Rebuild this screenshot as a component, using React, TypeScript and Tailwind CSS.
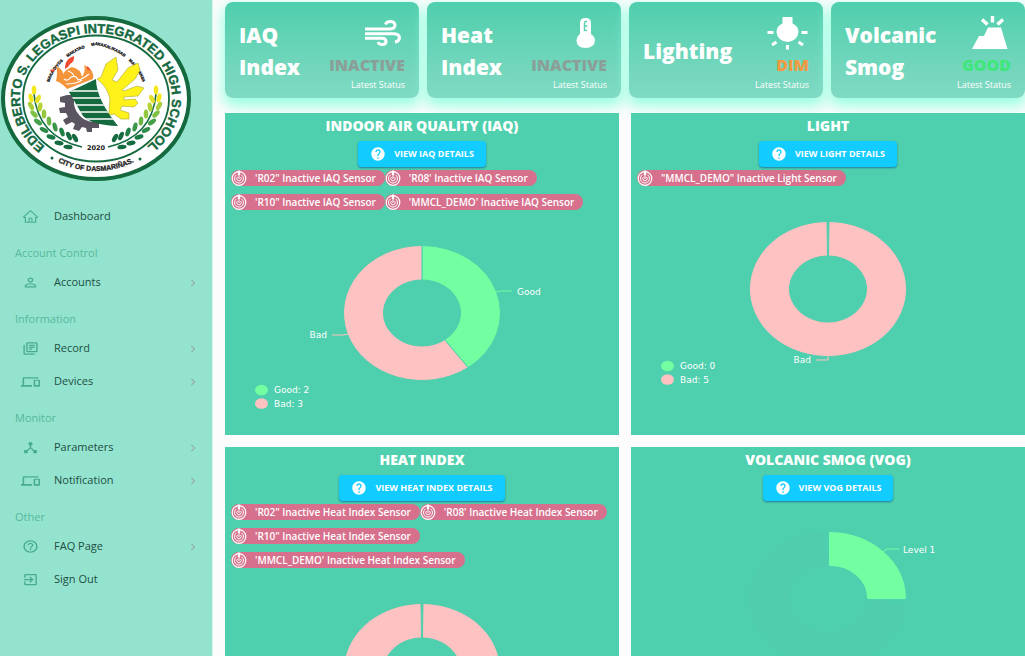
import React from "react";
import { AiOutlineHome } from "react-icons/ai";
import {
  MdChevronRight,
  MdDeviceHub,
  MdDevices,
  MdExitToApp,
  MdHelp,
  MdHelpOutline,
  MdOutlineLibraryBooks,
  MdPersonOutline,
} from "react-icons/md";
import type { IconType } from "react-icons";

const MINT = "#4ecfad";
const GREEN = "#72ffa2";
const PINK = "#ffc2c2";

/* ---------- School seal ---------- */

const LAUREL = [
  { x: 34, y: 90, r: 0, c: "#f4e81c" },
  { x: 31, y: 98, r: -15, c: "#f4e81c" },
  { x: 38, y: 99, r: 25, c: "#e3e02a" },
  { x: 31, y: 106, r: -30, c: "#a8cf3a" },
  { x: 40, y: 107, r: 10, c: "#b5d334" },
  { x: 34, y: 114, r: -45, c: "#7cc142" },
  { x: 44, y: 114, r: 0, c: "#93c83d" },
  { x: 38, y: 122, r: -55, c: "#43a047" },
  { x: 49, y: 121, r: -5, c: "#6bb544" },
  { x: 44, y: 130, r: -65, c: "#2e8b4a" },
  { x: 55, y: 127, r: -15, c: "#3a9648" },
  { x: 51, y: 137, r: -75, c: "#1a7a45" },
  { x: 62, y: 132, r: -20, c: "#1f7f46" },
  { x: 59, y: 143, r: -80, c: "#146b40" },
  { x: 69, y: 136, r: -25, c: "#146b40" },
  { x: 68, y: 147, r: -85, c: "#146b40" },
  { x: 75, y: 138, r: -30, c: "#146b40" },
];

function Laurel() {
  return (
    <g>
      <path d="M34 94 Q38 137 82 147" fill="none" stroke="#146b40" strokeWidth="1.6" />
      {LAUREL.map((l, i) => (
        <ellipse key={i} cx={l.x} cy={l.y} rx="2.3" ry="4.6" fill={l.c} transform={`rotate(${l.r} ${l.x} ${l.y})`} />
      ))}
    </g>
  );
}

function SchoolSeal() {
  return (
    <svg viewBox="0 15 192 168" className="block h-[168px] w-48" role="img" aria-label="School seal">
      <defs>
        <path id="ringTop" d="M96 163 A76 65 0 0 1 96 33 A76 65 0 0 1 96 163" />
        <path id="mottoTop" d="M96 149 A61 53 0 0 1 96 45 A61 53 0 0 1 96 149" />
        <path id="ringBottom" d="M17 98 A79 73 0 0 0 175 98" />
        <clipPath id="torch">
          <path d="M69 92 L96 79 Q96 99 118 126 Q92 125 83 116 Z" />
        </clipPath>
      </defs>
      <ellipse cx="96" cy="98.5" rx="93" ry="80.5" fill="#fff" stroke="#14693f" strokeWidth="4" />
      <ellipse cx="96" cy="98.5" rx="73" ry="63" fill="none" stroke="#14693f" strokeWidth="1.8" />
      <text fill="#14693f" stroke="#14693f" strokeWidth="0.4" fontFamily="Liberation Sans, sans-serif" fontWeight="700" fontSize="13" textAnchor="middle">
        <textPath href="#ringTop" startOffset="50%">EDILBERTO S. LEGASPI INTEGRATED HIGH SCHOOL</textPath>
      </text>
      <text fill="#222" stroke="#222" strokeWidth="0.3" fontFamily="Liberation Sans, sans-serif" fontWeight="700" fontSize="4" textAnchor="middle">
        <textPath href="#mottoTop" startOffset="50%">
          {"MAKA-DIYOS\u00a0\u00a0\u00a0\u00a0\u00a0MAKATAO\u00a0\u00a0\u00a0\u00a0\u00a0\u00a0MAKAKALIKASAN\u00a0\u00a0\u00a0\u00a0\u00a0MAKABANSA"}
        </textPath>
      </text>
      <text fill="#222" stroke="#222" strokeWidth="0.3" fontFamily="Liberation Sans, sans-serif" fontWeight="700" fontSize="7" textAnchor="middle">
        <textPath href="#ringBottom" startOffset="50%">CITY OF DASMARIÑAS.</textPath>
      </text>
      <circle cx="52" cy="158" r="1.5" fill="#14693f" />
      <circle cx="140" cy="159" r="1.5" fill="#14693f" />
      <Laurel />
      <g transform="translate(190 0) scale(-1 1)">
        <Laurel />
      </g>
      <text x="96" y="150" fill="#222" fontFamily="DejaVu Sans, sans-serif" fontWeight="700" fontSize="6.5" textAnchor="middle">2020</text>
      {/* gear */}
      <path
        d="M67 95 L60 97 L60 102 L65 103 L65 107 L59 108 L60 113 L66 113 L68 117 L63 120 L66 125 L72 122 L75 124 L73 129 L79 131 L82 127 L86 128 L87 132 L92 132 L92 128 L99 128 L99 121 Q88 124 80 116 Q73 109 74 99 L72 95 Z"
        fill="#5a5560"
      />
      {/* sun */}
      <path
        d="M97 79 L101 77 L106 64 L116 57 L118 70 L112 80 L117 82 L128 68 L138 63 L140 70 L135 79 L122 90 L124 91 L137 86 L144 88 L138 96 L124 97 L124 100 L135 99 L138 103 L134 107 L122 106 L120 110 L129 113 L129 119 L121 119 L114 114 L109 115 Q109 107 110 99 Q107 86 97 79 Z"
        fill="#fff21a"
        stroke="#b6b33a"
        strokeWidth="0.7"
      />
      {/* torch */}
      <g clipPath="url(#torch)">
        <rect x="66" y="77" width="56" height="52" fill="#14693f" />
        <path d="M66 91 H122 M66 98 H122 M66 105 H122 M66 112 H122 M66 119 H122" stroke="#fff" strokeWidth="1.5" />
      </g>
      {/* flame */}
      <path
        d="M67 89 Q62 83 56 81 Q58 72 56 66 Q63 69 63 74 Q66 69 72 67 Q81 69 82 77 Q86 71 84 65 Q95 70 93 79 Q80 84 67 89 Z"
        fill="#f5953b"
      />
      <path d="M64 79 Q68 82 71 77 Q76 75 78 80 Q83 79 89 74 M66 84 Q77 84 82 80 M68 71 Q74 73 74 77" fill="none" stroke="#fff" strokeWidth="1.2" />
      <path d="M65 67 Q65 59 74 56 Q75 61 70 64 Q69 67 65 69 Z M49 70 L55 69 L54 72 Z M87 66 Q90 68 91 71 L87 69 Z" fill="#ef4b32" />
    </svg>
  );
}

/* ---------- Sidebar ---------- */

type NavItem = { label: string; icon: IconType; wide?: boolean; more?: boolean };
type NavGroup = { heading?: string; items: NavItem[] };

const NAV: NavGroup[] = [
  { items: [{ label: "Dashboard", icon: AiOutlineHome }] },
  { heading: "Account Control", items: [{ label: "Accounts", icon: MdPersonOutline, more: true }] },
  {
    heading: "Information",
    items: [
      { label: "Record", icon: MdOutlineLibraryBooks, more: true },
      { label: "Devices", icon: MdDevices, wide: true, more: true },
    ],
  },
  {
    heading: "Monitor",
    items: [
      { label: "Parameters", icon: MdDeviceHub, more: true },
      { label: "Notification", icon: MdDevices, wide: true, more: true },
    ],
  },
  {
    heading: "Other",
    items: [
      { label: "FAQ Page", icon: MdHelpOutline, more: true },
      { label: "Sign Out", icon: MdExitToApp },
    ],
  },
];

function Sidebar() {
  return (
    <aside className="w-[213px] shrink-0 border-r border-[#d5f5ec] bg-[#94e3ce] pt-[15px]">
      <SchoolSeal />
      <nav className="mt-[17px]">
        {NAV.map((group, i) => (
          <div key={i}>
            {group.heading && (
              <h2 className="flex h-[33px] items-center pt-2 pl-[15px] text-[11px] font-medium text-[#56b99b]">{group.heading}</h2>
            )}
            <ul>
              {group.items.map(({ label, icon: Icon, wide, more }) => (
                <li key={label}>
                  <a href="#" className="flex h-[33px] items-center pr-3 pl-[19px] text-[11px] font-medium text-[#1d4f43]">
                    <span className="mr-[13px] flex w-[22px] justify-center text-[#48ad90]">
                      <Icon preserveAspectRatio="none" className={wide ? "h-[14px] w-[19px]" : "h-[15px] w-[17px]"} />
                    </span>
                    <span className="flex-1">{label}</span>
                    {more && <MdChevronRight className="size-[14px] text-[#94aca6]" />}
                  </a>
                </li>
              ))}
            </ul>
          </div>
        ))}
      </nav>
    </aside>
  );
}

/* ---------- Status cards ---------- */

const WindIcon = () => (
  <svg viewBox="0 0 40 32" className="h-8 w-10" fill="none" stroke="#fff" strokeWidth="3">
    <path d="M0 13 H24 Q30 13 30 9 Q29.500 5.500 25.500 5.500 Q21.500 5.500 20.500 8.500" />
    <path d="M0 17.700 H29 Q34.500 18 34.500 22 Q34 25.500 30 26" />
    <path d="M0 22.200 H17 Q21 22.200 21 25.500 Q21 28.500 17 28.500 Q14 28.500 13 26" />
  </svg>
);

const ThermometerIcon = () => (
  <svg viewBox="0 0 40 32" className="h-8 w-10">
    <path d="M13 18 V7 Q13 2 18.500 2 Q24 2 24 7 V18 Q28 20.500 28 25 Q27 32 18.500 32 Q10 32 9.500 25 Q9.500 20.500 13 18 Z" fill="#fff" />
    <path d="M17.500 15 V7 Q17.500 5.500 19 5.500 H20 M17.500 10 H20.500 M17.500 14.500 H20" fill="none" stroke="#5fd2b4" strokeWidth="1.500" />
  </svg>
);

const BulbIcon = () => (
  <svg viewBox="0 0 40 32" className="h-8 w-10 overflow-visible">
    <path d="M13.500 1 H23.500 V7.500 Q29.500 10 29.500 16 Q28.500 25 18.500 26 Q8.500 25 7.500 16 Q7.500 10 13.500 7.500 Z" fill="#fff" />
    <path d="M-1.500 16.500 H4.500 M32.500 16.500 H38.500 M18.500 29 V33.500 M3 29 L7.500 26 M29.500 26 L34 29" stroke="#fff" strokeWidth="3" />
  </svg>
);

const VolcanoIcon = () => (
  <svg viewBox="0 0 40 32" className="h-8 w-10 overflow-visible">
    <path d="M1 33 L8 20 L13 20 L17 11.500 H30 L36.500 33 Z" fill="#fff" />
    <path d="M21.500 0 V6.500 M11 3.500 L16.500 8.500 M32 3.500 L26.500 8.500" stroke="#fff" strokeWidth="3.400" />
  </svg>
);

const CARDS = [
  { title: "IAQ Index", status: "INACTIVE", tone: "text-[#8b9f99]", Icon: WindIcon },
  { title: "Heat Index", status: "INACTIVE", tone: "text-[#8b9f99]", Icon: ThermometerIcon },
  { title: "Lighting", status: "DIM", tone: "text-[#f09b42]", Icon: BulbIcon },
  { title: "Volcanic Smog", status: "GOOD", tone: "text-[#40e67c]", Icon: VolcanoIcon },
];

function StatusCards() {
  return (
    <section className="grid grid-cols-4 gap-2">
      {CARDS.map(({ title, status, tone, Icon }) => (
        <article
          key={title}
          className="flex min-h-24 items-center rounded-lg bg-linear-to-b from-[#4ecfad] to-[#80dac3] px-[14px] shadow-[0_6px_14px_2px_#98ffe1]"
        >
          <h3 className="w-0 flex-1 pt-[2px] text-[21px] leading-8 font-extrabold text-white">{title}</h3>
          <div className="flex flex-col items-end pt-[6px]">
            <Icon />
            <p className={`mt-[5px] text-[16px] leading-6 font-extrabold ${tone}`}>{status}</p>
            <p className="mt-[2px] text-[9px] leading-3 font-medium text-white">Latest Status</p>
          </div>
        </article>
      ))}
    </section>
  );
}

/* ---------- Sensor panels ---------- */

const CX = 197;
const CY = 96;

function slicePath(from: number, to: number) {
  const at = (turn: number, rx: number, ry: number) => {
    const a = turn * Math.PI * 2;
    return `${(CX + rx * Math.sin(a)).toFixed(2)} ${(CY - ry * Math.cos(a)).toFixed(2)}`;
  };
  const large = to - from > 0.5 ? 1 : 0;
  return `M${at(from, 78.5, 67.5)} A78.5 67.5 0 ${large} 1 ${at(to, 78.5, 67.5)} L${at(to, 38.5, 33)} A38.5 33 0 ${large} 0 ${at(from, 38.5, 33)} Z`;
}

function Slice({ from, to, color }: { from: number; to: number; color: string }) {
  return <path d={slicePath(from, to)} fill={color} stroke={MINT} strokeWidth="1" />;
}

function Legend({ good, bad }: { good: number; bad: number }) {
  return (
    <g>
      <ellipse cx="36.500" cy="173" rx="6.500" ry="5.300" fill={GREEN} />
      <text x="49" y="176">{`Good: ${good}`}</text>
      <ellipse cx="36.500" cy="186.500" rx="6.500" ry="5.300" fill={PINK} />
      <text x="49" y="190">{`Bad: ${bad}`}</text>
    </g>
  );
}

function Chart({ children }: { children: React.ReactNode }) {
  return (
    <svg viewBox="0 0 394 218" className="block h-[218px] w-full fill-white font-['DejaVu_Sans',sans-serif] text-[9px]">
      {children}
    </svg>
  );
}

const FullBadChart = () => (
  <Chart>
    <Slice from={0.002} to={0.998} color={PINK} />
    <path d="M197 163 V167 H185" fill="none" stroke={PINK} />
    <text x="180" y="170" textAnchor="end">Bad</text>
    <Legend good={0} bad={5} />
  </Chart>
);

const AirChart = () => (
  <Chart>
    <Slice from={0} to={0.4} color={GREEN} />
    <Slice from={0.4} to={1} color={PINK} />
    <path d="M271 75 L275 74 H287" fill="none" stroke={GREEN} />
    <text x="292" y="78">Good</text>
    <path d="M123 117 L119 118 H107" fill="none" stroke={PINK} />
    <text x="102" y="121" textAnchor="end">Bad</text>
    <Legend good={2} bad={3} />
  </Chart>
);

const SmogChart = () => (
  <Chart>
    <path d={slicePath(0.26, 0.995)} fill="#f08aa0" opacity="0.015" />
    <path d="M199 30 A76 66 0 0 1 274 95 H237 A38 32.500 0 0 0 199 62 Z" fill={GREEN} stroke={GREEN} strokeWidth="2" strokeLinejoin="round" />
    <path d="M252 49 L256 46 H268" fill="none" stroke={GREEN} />
    <text x="272" y="50">Level 1</text>
  </Chart>
);

const SensorIcon = () => (
  <svg viewBox="0 0 16 16" className="size-4 shrink-0" fill="none" stroke="#fff">
    <circle cx="8" cy="8.500" r="6.800" strokeWidth="1.200" />
    <path d="M5.500 4.800 A4.500 4.500 0 1 0 10.500 4.800" />
    <path d="M6.500 7 A2.200 2.200 0 1 0 9.500 7" />
    <path d="M8 0.500 V5" strokeWidth="2.400" />
    <path d="M8 5 V9" />
  </svg>
);

type PanelData = { title: string; action: string; sensors: string[]; chart: React.ReactNode };

const PANELS: PanelData[] = [
  {
    title: "INDOOR AIR QUALITY (IAQ)",
    action: "VIEW IAQ DETAILS",
    sensors: [
      "'R02\" Inactive IAQ Sensor",
      "'R08' Inactive IAQ Sensor",
      "'R10\" Inactive IAQ Sensor",
      "'MMCL_DEMO' Inactive IAQ Sensor",
    ],
    chart: <AirChart />,
  },
  {
    title: "LIGHT",
    action: "VIEW LIGHT DETAILS",
    sensors: ["\"MMCL_DEMO\" Inactive Light Sensor"],
    chart: <FullBadChart />,
  },
  {
    title: "HEAT INDEX",
    action: "VIEW HEAT INDEX DETAILS",
    sensors: [
      "'R02\" Inactive Heat Index Sensor",
      "'R08' Inactive Heat Index Sensor",
      "'R10\" Inactive Heat Index Sensor",
      "'MMCL_DEMO' Inactive Heat Index Sensor",
    ],
    chart: <FullBadChart />,
  },
  { title: "VOLCANIC SMOG (VOG)", action: "VIEW VOG DETAILS", sensors: [], chart: <SmogChart /> },
];

function Panel({ title, action, sensors, chart }: PanelData) {
  return (
    <section className="flex flex-col bg-[#4ecfad]">
      <h3 className="pt-[3px] text-center text-sm leading-5 font-extrabold text-white">{title}</h3>
      <button
        type="button"
        className="mx-auto mt-[5px] mb-[2px] flex h-[26px] items-center gap-2 rounded-sm bg-[#12cbff] px-3 text-[9px] font-bold text-white shadow-[0_1px_2px_#1e7f9a]"
      >
        <MdHelp className="size-4" />
        {action}
      </button>
      <ul className="flex flex-wrap pr-1 pl-[6px]">
        {sensors.map((s) => (
          <li key={s} className="flex h-6 items-start pt-px">
            <span className="flex h-4 items-center rounded-full bg-[#d6708c] pr-[9px] text-[10px] leading-4 font-semibold whitespace-nowrap text-white">
              <SensorIcon />
              <span className="pl-2">{s}</span>
            </span>
          </li>
        ))}
      </ul>
      {chart}
    </section>
  );
}

export default function App() {
  return (
    <div className="flex h-screen overflow-hidden bg-[#fcfcfc] font-['Open_Sans',sans-serif]">
      <Sidebar />
      <main className="flex-1 pt-[2px] pl-3">
        <StatusCards />
        <div className="mt-[15px] grid grid-cols-2 gap-3">
          {PANELS.map((p) => (
            <Panel key={p.title} {...p} />
          ))}
        </div>
      </main>
    </div>
  );
}
